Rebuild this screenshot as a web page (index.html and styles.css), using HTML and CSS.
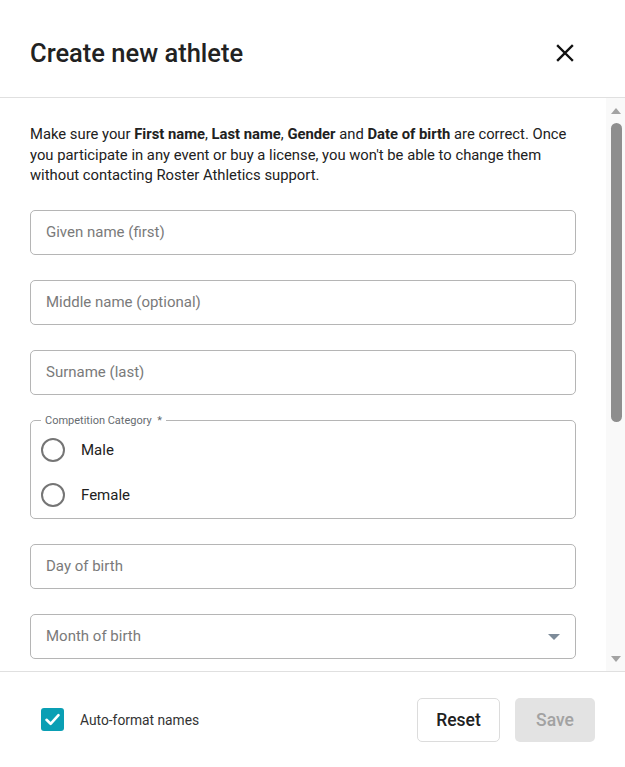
FILE: index.html
```html
<!DOCTYPE html>
<html lang="en">
<head>
<meta charset="utf-8">
<title>Create new athlete</title>
<link rel="stylesheet" href="styles.css">
</head>
<body>
<div class="dialog">
  <header class="header">
    <h1 class="title">Create new athlete</h1>
    <button class="close" aria-label="Close">
      <svg width="18" height="18" viewBox="0 0 18 18"><path d="M2 2 L16 16 M16 2 L2 16" stroke="#111" stroke-width="2.4" stroke-linecap="square" fill="none"/></svg>
    </button>
  </header>
  <div class="body">
    <div class="content">
      <p class="notice">Make sure your <b>First name</b>, <b>Last name</b>, <b>Gender</b> and <b>Date of birth</b> are correct. Once you participate in any event or buy a license, you won't be able to change them without contacting Roster Athletics support.</p>
      <input class="field" type="text" placeholder="Given name (first)">
      <input class="field" type="text" placeholder="Middle name (optional)">
      <input class="field" type="text" placeholder="Surname (last)">
      <fieldset class="group">
        <legend class="legend">Competition Category&nbsp; *</legend>
        <label class="radio-row"><span class="radio"></span><span class="radio-label">Male</span></label>
        <label class="radio-row"><span class="radio"></span><span class="radio-label">Female</span></label>
      </fieldset>
      <input class="field" type="text" placeholder="Day of birth">
      <div class="field select"><span class="select-text">Month of birth</span><span class="caret"></span></div>
    </div>
    <div class="scrollbar">
      <div class="sb-btn"><span class="arrow-up"></span></div>
      <div class="sb-track"><div class="sb-thumb"></div></div>
      <div class="sb-btn"><span class="arrow-down"></span></div>
    </div>
  </div>
  <footer class="footer">
    <label class="check">
      <span class="checkbox"><svg width="23" height="23" viewBox="0 0 23 23"><path d="M5.5 11.8 L9.6 15.8 L17.5 7.2" stroke="#fff" stroke-width="2.6" fill="none" stroke-linecap="round" stroke-linejoin="round"/></svg></span>
      <span class="check-label">Auto-format names</span>
    </label>
    <div class="actions">
      <button class="btn btn-reset">Reset</button>
      <button class="btn btn-save" disabled>Save</button>
    </div>
  </footer>
</div>
</body>
</html>
```
FILE: styles.css
```css
* { box-sizing: border-box; }
html, body { margin: 0; padding: 0; background: #fff; }
body { font-family: Roboto, "Liberation Sans", sans-serif; color: #212121; }

.dialog {
  width: 625px;
  height: 767px;
  display: flex;
  flex-direction: column;
  overflow: hidden;
}

.header {
  height: 98px;
  flex: 0 0 98px;
  border-bottom: 1px solid #e0e0e0;
  display: flex;
  align-items: center;
  justify-content: space-between;
  padding: 8px 51px 0 30px;
}
.title {
  margin: 0;
  font-size: 25.5px;
  font-weight: 500;
  color: #222;
  letter-spacing: 0;
}
.close {
  border: 0;
  background: none;
  padding: 0;
  width: 18px;
  height: 18px;
  display: flex;
  cursor: pointer;
}

.body {
  flex: 0 0 574px;
  height: 574px;
  display: flex;
  border-bottom: 1px solid #e0e0e0;
}
.content {
  flex: 1;
  padding: 26px 30px 0 30px;
  overflow: hidden;
  display: flex;
  flex-direction: column;
}
.notice {
  margin: 0 0 24px 0;
  font-size: 14.8px;
  line-height: 20.5px;
  color: #212121;
}
.notice b { font-weight: 700; }

.field {
  flex: 0 0 45px;
  height: 45px;
  width: 100%;
  margin: 0 0 25px 0;
  border: 1px solid #b5b5b5;
  border-radius: 5px;
  padding: 0 15px;
  font-family: inherit;
  font-size: 15px;
  color: #212121;
  background: #fff;
  outline: none;
}
.field::placeholder { color: #7a7a7a; opacity: 1; }
.select {
  display: flex;
  align-items: center;
  justify-content: space-between;
  padding-right: 15px;
}
.select-text { color: #7a7a7a; }
.caret {
  width: 0;
  height: 0;
  border-left: 6px solid transparent;
  border-right: 6px solid transparent;
  border-top: 6px solid #7d8b99;
  margin-top: 1px;
}

.group {
  margin: -5px 0 25px 0;
  border: 1px solid #b5b5b5;
  border-radius: 5px;
  padding: 1px 10px 0 10px;
  min-width: 0;
}
.legend {
  font-size: 11px;
  line-height: 12px;
  color: #666b70;
  padding: 0 4px;
}
.radio-row {
  height: 45px;
  display: flex;
  align-items: center;
  gap: 16px;
}
.radio {
  width: 24px;
  height: 24px;
  border: 2px solid #757575;
  border-radius: 50%;
  flex: 0 0 24px;
}
.radio-label {
  font-size: 15px;
  color: #212121;
}

.scrollbar {
  flex: 0 0 19px;
  width: 19px;
  background: #f9f9f9;
  display: flex;
  flex-direction: column;
  align-items: center;
}
.sb-btn {
  flex: 0 0 25px;
  display: flex;
  align-items: center;
  justify-content: center;
  width: 100%;
}
.arrow-up {
  width: 0; height: 0;
  border-left: 5px solid transparent;
  border-right: 5px solid transparent;
  border-bottom: 6px solid #a3a3a3;
  margin-left: 1px;
}
.arrow-down {
  width: 0; height: 0;
  border-left: 5px solid transparent;
  border-right: 5px solid transparent;
  border-top: 6px solid #a3a3a3;
  margin-left: 1px;
}
.sb-track {
  flex: 1;
  width: 100%;
  display: flex;
  justify-content: center;
}
.sb-thumb {
  width: 11px;
  height: 299px;
  margin-left: 1px;
  background: #8e8e8e;
  border-radius: 6px;
}

.footer {
  flex: 1;
  display: flex;
  align-items: center;
  justify-content: space-between;
  padding: 0 30px 0 41px;
}
.check {
  display: flex;
  align-items: center;
  gap: 16px;
}
.checkbox {
  width: 23px;
  height: 23px;
  background: #0a9fb4;
  border-radius: 3px;
  display: flex;
}
.check-label {
  font-size: 13.8px;
  color: #333;
}
.actions {
  display: flex;
  gap: 15px;
}
.btn {
  height: 44px;
  border-radius: 5px;
  font-family: inherit;
  font-size: 17.5px;
  font-weight: 500;
  padding: 0;
}
.btn-reset {
  width: 83px;
  background: #fff;
  border: 1px solid #dcdcdc;
  color: #212121;
}
.btn-save {
  width: 80px;
  background: #e3e3e3;
  border: 0;
  color: #a2a2a2;
}
```
